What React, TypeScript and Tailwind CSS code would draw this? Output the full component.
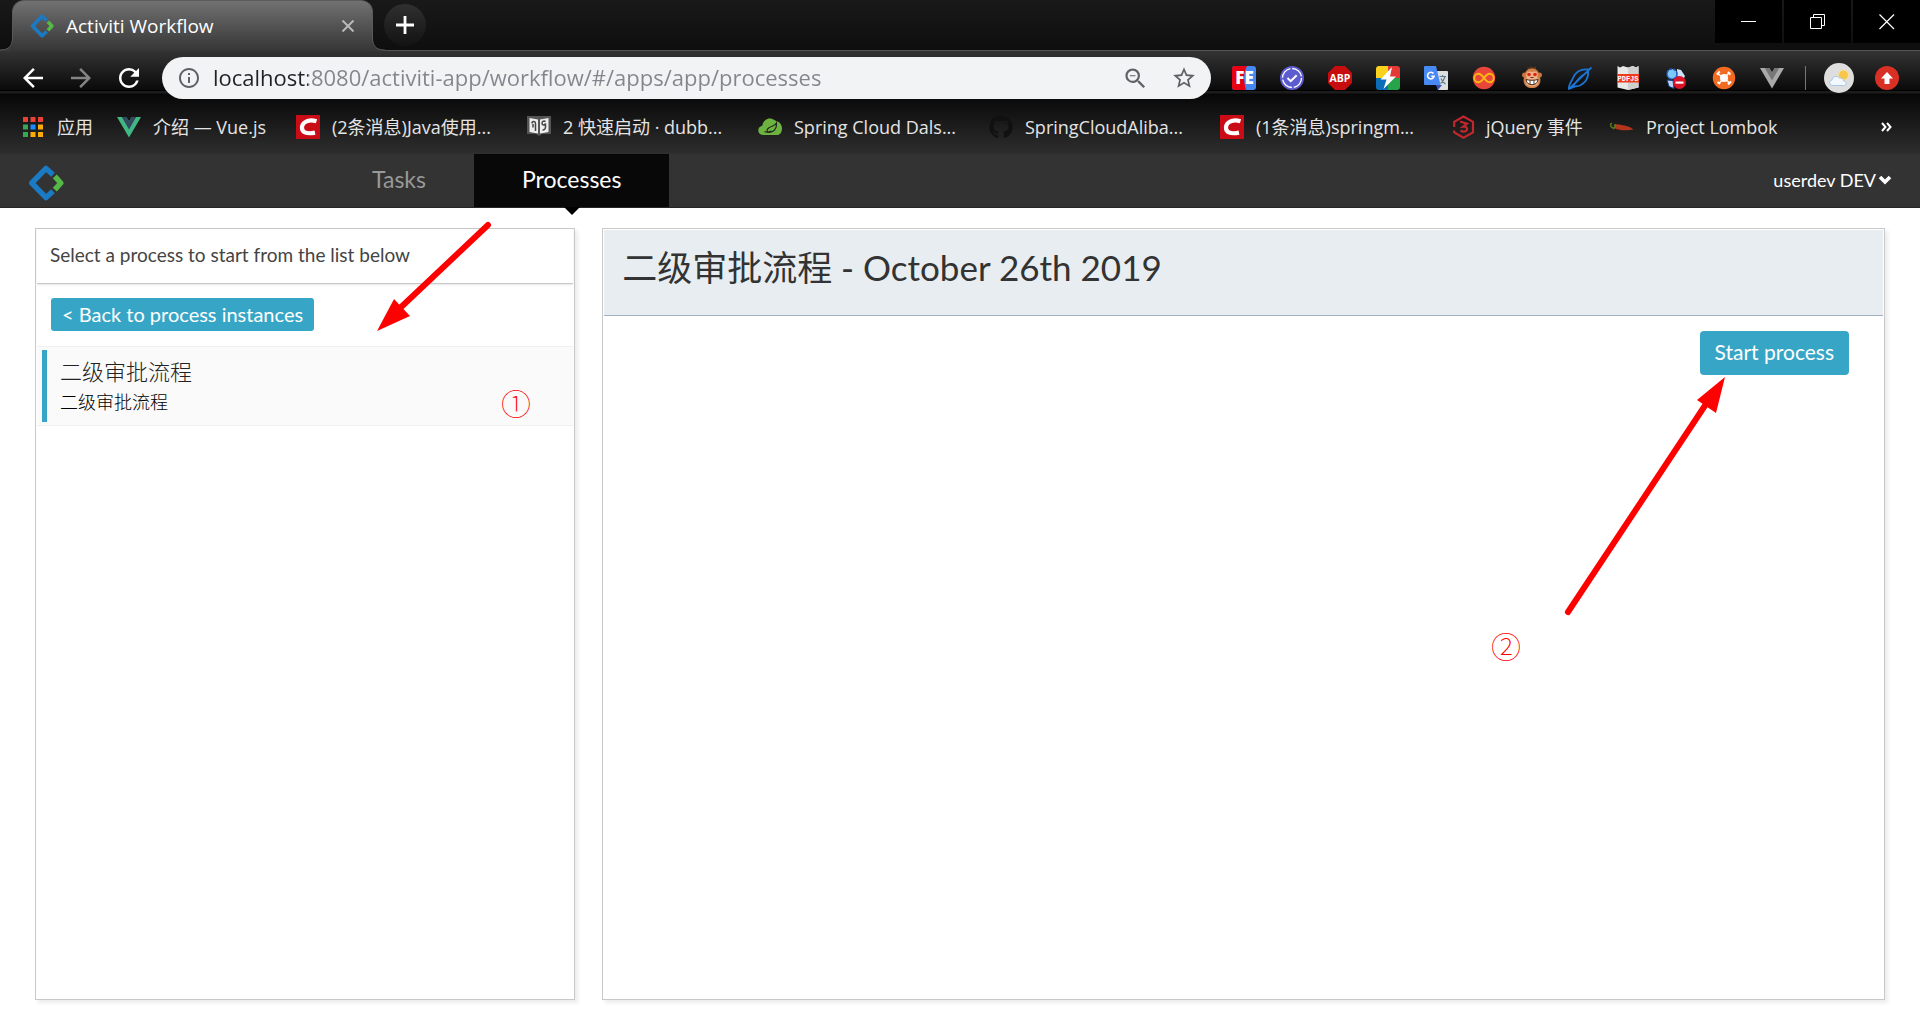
import React from "react";
import { FaGithub } from "react-icons/fa";
import {
  MdArrowBack,
  MdArrowForward,
  MdInfoOutline,
  MdRefresh,
  MdStarBorder,
  MdZoomOut,
} from "react-icons/md";

const CHROME_FONT = "font-['Open_Sans','Noto_Sans_CJK_SC',sans-serif]";
const APP_FONT = "font-['Lato','Noto_Sans_CJK_SC',sans-serif]";

function ActivitiLogo({ className }: { className: string }) {
  return (
    <svg viewBox="0 0 36 36" className={className} fill="none" aria-hidden="true">
      <path d="M25 9.700 18 3.400 3.800 18 18 32.600l7-6.300" stroke="#1b7ac4" strokeWidth="5.400" strokeLinejoin="round" />
      <path d="m26.800 11.400 6 6.600-6 6.600" stroke="#55b948" strokeWidth="5.400" strokeLinejoin="round" />
    </svg>
  );
}

function VueLogo({ outer, inner }: { outer: string; inner: string }) {
  return (
    <svg viewBox="0 0 24 24" className="size-6 shrink-0" aria-hidden="true">
      <path d="M0 2h9.3L12 6.6 14.7 2H24L12 22.6z" fill={outer} />
      <path d="M4.8 2h4.5L12 6.6 14.7 2h4.5L12 14.4z" fill={inner} />
    </svg>
  );
}

function CsdnLogo() {
  return (
    <svg viewBox="0 0 24 24" className="size-6 shrink-0" aria-hidden="true">
      <path fill="#ca0c16" d="M0 0h24v24H0z" />
      <path d="M20.5 6.2c-4-1.2-9.200-1-12 1.300-3.600 3-3.300 8.200.300 9.800 2.700 1.200 6.500 1.100 10.200.300" fill="none" stroke="#fff" strokeWidth="4.200" />
    </svg>
  );
}

function AppsGrid() {
  const dots = ["#ea4335", "#ea4335", "#ea4335", "#34a853", "#1a8cff", "#fbab05", "#34a853", "#fbab05", "#fbab05"];
  return (
    <svg viewBox="0 0 20 20" className="size-5 shrink-0" aria-hidden="true">
      {dots.map((fill, i) => (
        <rect key={i} x={(i % 3) * 7.5} y={Math.floor(i / 3) * 7.5} width="5" height="5" fill={fill} />
      ))}
    </svg>
  );
}

function BookIcon() {
  return (
    <svg viewBox="0 0 24 24" className="size-6 shrink-0" aria-hidden="true">
      <path d="M0 1h24v18h-9l-3 2-3-2H0z" fill="#555" />
      <path d="m2.500 3 8.500 1.500v14L2.500 17zM21.500 3 13 4.500v14l8.500-1.500z" fill="#eee" />
      <path d="M5 8.500c0-3 3.500-2.500 3.500 0V16M6 9v3.500M18.500 6.500c-2-1-3.500.2-3.500 2s2.500 2 3.500 0V12c0 2-1.300 3.200-3 3" fill="none" stroke="#444" strokeWidth="1.500" />
    </svg>
  );
}

function SpringLogo() {
  return (
    <svg viewBox="0 0 24 24" className="size-6 shrink-0" aria-hidden="true">
      <path d="M5 20C-.5 20-1.500 12.500 3.500 11c.7-.2 1-.5 1-1.200C5.500 4 12 1.500 16.500 5c.7.600 1.500 1 2.500 1.300 3 1 5 4 5 7.200 0 3.800-2 6.500-5 6.500z" fill="#6db33f" />
      <path d="M18.500 8c-1.500 3-5 3.200-7.500 4.700-2.800 1.700-2.500 4.500 0 4.800 4.500.3 8-4 7.500-9.500zM6.500 16.500c2 1.200 4 1 7-.5" fill="none" stroke="#222" strokeWidth="1.200" />
    </svg>
  );
}

function TutorialLogo() {
  return (
    <svg viewBox="0 0 24 24" className="size-6 shrink-0" fill="none" stroke="#c1272d" strokeWidth="2.200" aria-hidden="true">
      <path d="M2.200 12V6.800L11.500 1.500l9.500 5.300v10.600l-9.500 5.300-9.300-5.300v-2" />
      <path d="m8 6.500 7 2.200-3.800 3c3.300-.4 4.600 1.300 3.600 3.300-1 2-4 2-6.300.5" />
    </svg>
  );
}

function ChiliIcon() {
  return (
    <svg viewBox="0 0 24 24" className="size-6 shrink-0" aria-hidden="true">
      <path d="M4.500 10c2-1.300 4-.4 7 0 4 .6 8 1.500 12 4.500-5 1.300-13 1-17.500-.5-2-.8-2.500-2.500-1.500-4z" fill="#b5341c" />
      <path d="M6 11 3.500 13.500 1 11.500C0 9.500.8 8.200 2 8.600M4 10.500l2-1" fill="none" stroke="#557a1f" strokeWidth="1.500" />
    </svg>
  );
}

const bookmarks: { label: string; icon: React.ReactNode; item: string }[] = [
  { label: "应用", icon: <AppsGrid />, item: "w-[94px] gap-3.5" },
  { label: "介绍 — Vue.js", icon: <VueLogo outer="#41b883" inner="#35495e" />, item: "w-[179px] gap-3" },
  { label: "(2条消息)Java使用...", icon: <CsdnLogo />, item: "w-[231px] gap-3" },
  { label: "2 快速启动 · dubb...", icon: <BookIcon />, item: "w-[231px] gap-3" },
  { label: "Spring Cloud Dals...", icon: <SpringLogo />, item: "w-[231px] gap-3" },
  { label: "SpringCloudAliba...", icon: <FaGithub className="size-6 shrink-0 text-[#111]" />, item: "w-[231px] gap-3" },
  { label: "(1条消息)springm...", icon: <CsdnLogo />, item: "w-[232px] gap-3" },
  { label: "jQuery 事件", icon: <TutorialLogo />, item: "w-[158px] gap-[10px]" },
  { label: "Project Lombok", icon: <ChiliIcon />, item: "w-[200px] gap-3" },
];

const extensions: { name: string; art: React.ReactNode }[] = [
  {
    name: "FE helper",
    art: (
      <>
        <rect width="24" height="24" rx="3" fill="#4688f1" />
        <path d="M3 0h12c-4 8-3.500 14-1 24H3a3 3 0 0 1-3-3V3a3 3 0 0 1 3-3z" fill="#e60012" />
        <text x="12.500" y="18" textAnchor="middle" fontSize="17" fontWeight="800" fill="#fff" fontFamily="Open Sans, sans-serif">FE</text>
      </>
    ),
  },
  {
    name: "Checker",
    art: (
      <>
        <circle cx="12" cy="12" r="12" fill="#5d5bd0" />
        <circle cx="12" cy="12" r="9.500" fill="none" stroke="#fff" strokeWidth="1.300" strokeDasharray="13 1.900" />
        <path d="m7.500 12 3.200 3.200 6-6" fill="none" stroke="#fff" strokeWidth="2" />
      </>
    ),
  },
  {
    name: "Ad blocker",
    art: (
      <>
        <path d="M7 0h10l7 7v10l-7 7H7l-7-7V7z" fill="#c70d0d" />
        <text x="12" y="16" textAnchor="middle" fontSize="10.500" fontWeight="700" fill="#fff" fontFamily="Open Sans, sans-serif">ABP</text>
      </>
    ),
  },
  {
    name: "Lightning",
    art: (
      <>
        <path d="M3 0h10v12H0V3a3 3 0 0 1 3-3z" fill="#f8d21c" />
        <path d="M12 0h9a3 3 0 0 1 3 3v9H12z" fill="#e53935" />
        <path d="M0 12h12v12H3a3 3 0 0 1-3-3z" fill="#0b6db7" />
        <path d="M12 12h12v9a3 3 0 0 1-3 3h-9z" fill="#27a34a" />
        <path d="M16 1 4.500 13.500h6L7.500 23 20 10.500h-6z" fill="#fff" />
      </>
    ),
  },
  {
    name: "Translate",
    art: (
      <>
        <path d="M9 5h14a1 1 0 0 1 1 1v17a1 1 0 0 1-1 1h-9z" fill="#dcdfe1" />
        <path d="M1 0h11l4.500 19H1a1 1 0 0 1-1-1V1a1 1 0 0 1 1-1z" fill="#4889f4" />
        <path d="m12 19 2 5 4-5z" fill="#3a50b8" />
        <path d="M15.500 10.500H22M18.500 9v1.500M21 10.500c-.8 3-2 5-4.500 7M17 12.500c.8 2.500 2 4 4.500 5.500" stroke="#5f7d8c" strokeWidth="1.200" fill="none" />
        <path d="M9.500 7.600a3.300 3.300 0 1 0 .6 2.600H7.300" stroke="#fff" strokeWidth="1.600" fill="none" />
      </>
    ),
  },
  {
    name: "Infinity",
    art: (
      <>
        <circle cx="12" cy="12" r="11.200" fill="#e8463a" />
        <path d="M12 12c-2.500-3.500-4-4.200-5.500-4.200a4.200 4.200 0 0 0 0 8.400C8 16.200 9.500 15.500 12 12s4-4.200 5.500-4.200a4.200 4.200 0 0 1 0 8.400C16 16.200 14.500 15.500 12 12z" fill="none" stroke="#fcb813" strokeWidth="1.900" />
      </>
    ),
  },
  {
    name: "Monkey",
    art: (
      <>
        <path d="M8 3 7 1l3 1 1-2 2 1.500L16 .5 16 3z" fill="#5b3418" />
        <circle cx="4.500" cy="9" r="2.500" fill="#c9743c" />
        <circle cx="19.500" cy="9" r="2.500" fill="#c9743c" />
        <path d="M12 2.500c5 0 7 3 7 7 2.500 3 2.500 12.500-7 12.500S2.500 12.500 5 9.500c0-4 2-7 7-7z" fill="#d08048" />
        <path d="M12 6c5-2 7 2 5 5.500 3 3 1.500 9-5 9s-8-6-5-9C5 8 7 4 12 6z" fill="#eeb389" />
        <circle cx="9" cy="8.500" r="1.800" fill="#e02414" />
        <circle cx="15" cy="8.500" r="1.800" fill="#e02414" />
        <path d="M6 13.500c3 1 9 1 12 0-.2 7-11.800 7-12 0z" fill="#fff" stroke="#4a2410" strokeWidth="1" />
        <path d="M10 14.500v3.500m4-3.500v3.500m-3.500-6.500h3" stroke="#4a2410" strokeWidth=".9" />
      </>
    ),
  },
  {
    name: "Leaf",
    art: (
      <path d="M1 23C0 19 3.500 16 5 12 8 5 14 3 20 3.500c1 7-2 13-8 16C8 21 5 20 1 23zM1 23 23.500 1.500M3.500 22.500C6 19 10 12 15 9" fill="none" stroke="#1c74d4" strokeWidth="1.800" />
    ),
  },
  {
    name: "PDF viewer",
    art: (
      <>
        <path d="M1.500 0 4 1.500 7 0l5 1.500L17 0l3 1.500L22.500 0v21.500L12 24 1.500 21.500z" fill="#e8e8e8" />
        <path d="M12 1.500 17 0l3 1.500L22.500 0v21.500L12 24z" fill="#cfcfcf" />
        <path d="M1 8h22v8.500H1z" fill="#f03a1c" />
        <text x="12" y="15" textAnchor="middle" fontSize="7" fontWeight="700" fill="#fff" fontFamily="Liberation Mono, monospace">PDFJS</text>
      </>
    ),
  },
  {
    name: "Blocker",
    art: (
      <>
        <path d="m13 3 4 1 4 6-2 4-6-4z" fill="#cfe3f7" />
        <circle cx="8" cy="8" r="5" fill="#7cc8f8" stroke="#1e5ec8" strokeWidth="1.600" strokeDasharray="3 1" />
        <path d="m3 14 6 .5 1 8-5-2z" fill="#b9d5f2" stroke="#173b8e" />
        <circle cx="15.500" cy="16.500" r="6.500" fill="#dc1226" />
        <path d="M11.500 15.500h8v2.200h-8z" fill="#fff" />
      </>
    ),
  },
  {
    name: "Hub",
    art: (
      <>
        <circle cx="12" cy="12" r="11.200" fill="#f26b21" />
        <circle cx="12" cy="12" r="4" fill="#fff" />
        <path d="m12 12-6-4m6 4 5.500-5.500M12 12l5.500 5M12 12l-5 5.500" stroke="#fff" strokeWidth="1.500" />
        <path d="m4.800 8.500 3-3M16 6l2.500 2.500M19 15.500l-3 3M5.500 16l2.500 2" stroke="#fff" strokeWidth="2" />
      </>
    ),
  },
];

function TabStrip() {
  return (
    <div className="flex h-[51px] items-start bg-linear-to-b from-[#191919] to-[#0e0e0e] pl-3 shadow-[inset_0_-1px_0_#565656]">
      <div className="relative flex h-[51px] w-[361px] items-center rounded-t-xl border border-b-0 border-[#5a5a5a] bg-linear-to-b from-[#727272] to-[#363636] pr-3.5 pl-[17px]">
        <svg viewBox="0 0 13 13" className="absolute bottom-0 -left-[13px] size-[13px]" aria-hidden="true">
          <path d="M14 0v13H0v-1c9 0 12-4 12-12z" fill="#383838" />
          <path d="M0 12c9 0 12.500-4 12.500-12" fill="none" stroke="#5a5a5a" />
        </svg>
        <svg viewBox="0 0 13 13" className="absolute -right-[13px] bottom-0 size-[13px]" aria-hidden="true">
          <path d="M-1 0v13h14v-1C4 12 1 8 1 0z" fill="#383838" />
          <path d="M13 12C4 12 .5 8 .5 0" fill="none" stroke="#5a5a5a" />
        </svg>
        <ActivitiLogo className="size-6 shrink-0" />
        <span className="ml-3 flex-1 text-[19px] text-white">Activiti Workflow</span>
        <button type="button" aria-label="Close tab" className="p-1">
          <svg viewBox="0 0 12 12" className="size-3" aria-hidden="true">
            <path d="m0.500 0.500 11 11m0-11-11 11" stroke="#b9b9b9" strokeWidth="2" />
          </svg>
        </button>
      </div>
      <button type="button" aria-label="New tab" className="mt-1 ml-[11px] flex size-[42px] items-center justify-center rounded-full bg-linear-to-b from-[#303030] to-[#131313]">
        <svg viewBox="0 0 18 18" className="size-[18px]" aria-hidden="true">
          <path d="M9 0v18M0 9h18" stroke="#fff" strokeWidth="2.800" />
        </svg>
      </button>
      <div className="ml-auto flex gap-0.5">
        <button type="button" aria-label="Minimize" className="flex h-[43px] w-[67px] items-center justify-center bg-black">
          <svg viewBox="0 0 16 16" className="size-4" aria-hidden="true">
            <path d="M0 7.500h15" stroke="#fff" />
          </svg>
        </button>
        <button type="button" aria-label="Restore" className="flex h-[43px] w-[67px] items-center justify-center bg-black">
          <svg viewBox="0 0 16 16" className="size-4" fill="none" stroke="#fff" aria-hidden="true">
            <path d="M.5 3.500h11v11H.5zM3.500 3.500v-3h11v11h-3" />
          </svg>
        </button>
        <button type="button" aria-label="Close" className="flex h-[43px] w-[67px] items-center justify-center bg-black">
          <svg viewBox="0 0 16 16" className="size-4" aria-hidden="true">
            <path d="m.5.5 14.500 14.500m0-14.500-14.500 14.500" stroke="#fff" strokeWidth="1.200" />
          </svg>
        </button>
      </div>
    </div>
  );
}

function Toolbar() {
  return (
    <div className="flex items-center pt-1.5 pr-[21px] pl-[18px]">
      <div className="flex gap-[18px] text-white">
        <button type="button" aria-label="Back"><MdArrowBack className="size-[30px]" /></button>
        <button type="button" aria-label="Forward"><MdArrowForward className="size-[30px] text-[#858585]" /></button>
        <button type="button" aria-label="Reload"><MdRefresh className="size-[30px]" /></button>
      </div>
      <div className="ml-[18px] flex h-[42px] flex-1 items-center rounded-full bg-[#f1f3f4] pr-3.5 pl-[15px] text-[#5f6368]">
        <MdInfoOutline className="size-6 shrink-0" />
        <input
          type="text"
          aria-label="Address"
          defaultValue="localhost:8080/activiti-app/workflow/#/apps/app/processes"
          className="mx-3 h-full flex-1 bg-[linear-gradient(90deg,#202124_95px,#80868b_95px)] bg-clip-text pb-0.5 text-[22px] text-transparent outline-none"
        />
        <button type="button" aria-label="Zoom out"><MdZoomOut className="size-[27px]" /></button>
        <button type="button" aria-label="Bookmark this page" className="ml-[22px]"><MdStarBorder className="size-[26px]" /></button>
      </div>
      <div className="ml-[21px] flex items-center gap-6">
        {extensions.map((ext) => (
          <button key={ext.name} type="button" aria-label={ext.name}>
            <svg viewBox="0 0 24 24" className="size-6" aria-hidden="true">{ext.art}</svg>
          </button>
        ))}
        <button type="button" aria-label="Vue devtools"><VueLogo outer="#aaaaaa" inner="#777777" /></button>
      </div>
      <span className="ml-[21px] h-6 w-px bg-[#777]" />
      <button type="button" aria-label="Profile" className="ml-[18px]">
        <svg viewBox="0 0 30 30" className="size-[30px]" aria-hidden="true">
          <circle cx="15" cy="15" r="15" fill="#dedede" />
          <circle cx="19.500" cy="12" r="5" fill="#f7c64a" stroke="#fbe3a0" />
          <path d="M9 22.500c-4 0-4.500-5-1-5.500.3-3.500 5-5 7.300-2 2-.5 4.200.5 4.200 3 3.500 0 3.500 4.500 0 4.500z" fill="#f3f8ff" stroke="#a9c6ec" />
        </svg>
      </button>
      <button type="button" aria-label="Update" className="ml-[21px]">
        <svg viewBox="0 0 24 24" className="size-6" aria-hidden="true">
          <circle cx="12" cy="12" r="12" fill="#d93025" />
          <path d="m12 6 6 6.500h-3.500V18h-5v-5.500H6z" fill="#fff" />
        </svg>
      </button>
    </div>
  );
}

function BookmarksBar() {
  return (
    <nav aria-label="Bookmarks" className="flex h-[55px] items-center pr-7 pl-[23px] text-lg text-[#e4e4e4]">
      {bookmarks.map((b) => (
        <a key={b.label} href="#" className={`flex shrink-0 items-center whitespace-nowrap ${b.item}`}>
          {b.icon}
          <span>{b.label}</span>
        </a>
      ))}
      <button type="button" aria-label="More bookmarks" className="ml-auto">
        <svg viewBox="0 0 11 10" className="h-2.5 w-[11px]" fill="none" stroke="#fff" strokeWidth="2" aria-hidden="true">
          <path d="m1 1 3.500 4L1 9M6 1l3.500 4L6 9" />
        </svg>
      </button>
    </nav>
  );
}

function AppHeader() {
  return (
    <header className="flex h-[54px] items-stretch border-b border-[#262626] bg-[#333] px-7">
      <a href="#" aria-label="Home" className="flex w-[296px] items-center pt-1">
        <ActivitiLogo className="size-9" />
      </a>
      <nav className="flex text-[23px]">
        <a href="#" className="flex items-center px-12 pb-0.5 text-[#999]">Tasks</a>
        <a href="#" aria-current="page" className="relative flex items-center bg-[#080808] px-12 pb-0.5 text-white">
          Processes
          <span className="absolute top-full left-1/2 -translate-x-1/2 border-x-8 border-t-8 border-x-transparent border-t-black" />
        </a>
      </nav>
      <button type="button" className="ml-auto flex items-center gap-0.5 pb-0.5 text-lg text-white">
        userdev DEV
        <svg viewBox="0 0 14 10" className="h-2.5 w-3.5" aria-hidden="true">
          <path d="m2 2 5 5 5-5" fill="none" stroke="#fff" strokeWidth="3.600" />
        </svg>
      </button>
    </header>
  );
}

const PANEL = "relative border border-[#c8c8c8] bg-white shadow-[3px_3px_4px_rgba(0,0,0,0.08)]";
const MARKER = "absolute font-['Noto_Sans_CJK_SC',sans-serif] text-[30px] leading-[30px] font-thin text-[#f00]";

function ProcessListPanel() {
  return (
    <section className={PANEL}>
      <p className="mx-px flex h-[55px] items-center border-b border-[#c8c8c8] px-[13px] pb-0.5 text-[19px] text-[#444] shadow-[0_1px_2px_rgba(0,0,0,0.1)]">
        Select a process to start from the list below
      </p>
      <div className="px-[15px] pt-3.5 pb-[15px]">
        <button type="button" className="h-[33px] rounded-[3px] bg-[#37a6c6] px-[11px] pb-0.5 text-[20px] text-white">
          &lt; Back to process instances
        </button>
      </div>
      <ul className="mx-px">
        <li className="border-y border-[#f0f0f0] bg-[#fafafa] py-[3px] pl-[5px]">
          <a href="#" className="flex h-[72px] flex-col justify-center border-l-[5px] border-[#37a6c6] pl-[13px] font-light">
            <span className="text-[22px] leading-8 text-[#222]">二级审批流程</span>
            <span className="text-lg leading-7 text-black">二级审批流程</span>
          </a>
        </li>
      </ul>
      <svg viewBox="0 0 126 120" className="absolute -top-[11px] left-[334px] h-[120px] w-[126px]" aria-hidden="true">
        <path d="M118 7 28 92" stroke="#f00" strokeWidth="6" strokeLinecap="round" />
        <path d="M7 113 24 81l16 17z" fill="#f00" />
      </svg>
      <span className={`${MARKER} top-[158px] left-[465px]`}>①</span>
    </section>
  );
}

function ProcessDetailPanel() {
  return (
    <section className={PANEL}>
      <div className="mx-px mt-px flex h-[86px] items-start border-b border-[#9fb0c0] bg-[#e8edf1] px-[18px] pt-4">
        <h1 className="text-[35px] leading-[42px] text-[#333]">二级审批流程 - October 26th 2019</h1>
      </div>
      <div className="flex justify-end px-[35px] pt-[15px]">
        <button type="button" className="h-11 rounded bg-[#37a6c6] px-[15px] pb-0.5 text-[21px] text-white">
          Start process
        </button>
      </div>
      <svg viewBox="0 0 170 250" className="absolute top-[141px] right-[154px] h-[250px] w-[170px]" aria-hidden="true">
        <path d="M8 242 150 28" stroke="#f00" strokeWidth="6" strokeLinecap="round" />
        <path d="m165 7-28 23 19 13z" fill="#f00" />
      </svg>
      <span className={`${MARKER} top-[401px] right-[363px]`}>②</span>
    </section>
  );
}

export default function App() {
  return (
    <div className="flex min-h-screen flex-col bg-white">
      <div className={CHROME_FONT}>
        <TabStrip />
        <div className="bg-[linear-gradient(180deg,#333_0px,#0a0a0a_39px,#000_39px,#000_40px,#1c1c1c_40px,#1c1c1c_42px,#070707_43px,#2e2e2e_103px)]">
          <Toolbar />
          <BookmarksBar />
        </div>
      </div>
      <div className={`flex flex-1 flex-col ${APP_FONT}`}>
        <AppHeader />
        <main className="grid flex-1 grid-cols-[8fr_19fr] gap-x-[27px] px-[35px] pt-5 pb-[15px]">
          <ProcessListPanel />
          <ProcessDetailPanel />
        </main>
      </div>
    </div>
  );
}
